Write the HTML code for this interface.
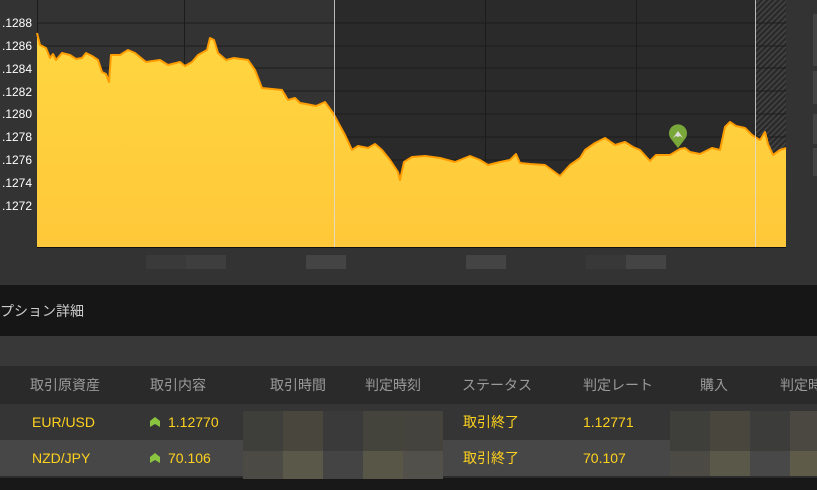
<!DOCTYPE html>
<html><head><meta charset="utf-8"><style>
body{margin:0;width:817px;height:490px;overflow:hidden;background:#181818;font-family:"Liberation Sans","Noto Sans CJK JP",sans-serif;position:relative}
.a{position:absolute}
.t{position:absolute;font-size:14px;line-height:16px;white-space:nowrap}
.h{color:#9a9a9a}
.y{color:#ffd21e}
.b{position:absolute;width:40px}
</style></head><body>
<div class="a" style="left:0;top:0;width:817px;height:285px;background:#333"></div>
<svg class="a" style="left:0;top:0" width="817" height="285">
<rect x="334" y="0" width="452" height="247" fill="#2a2a2a"/>
<defs><pattern id="hp" width="4" height="4" patternUnits="userSpaceOnUse" patternTransform="rotate(45)"><rect width="4" height="4" fill="#2a2a2a"/><rect width="1.5" height="4" fill="#444"/></pattern>
<linearGradient id="g" x1="0" y1="0" x2="0" y2="1"><stop offset="0" stop-color="#ffd640"/><stop offset="1" stop-color="#ffc83a"/></linearGradient></defs>
<rect x="755" y="0" width="31" height="247" fill="url(#hp)"/>
<g stroke="#1c1c1c" stroke-width="1">
<line x1="37" y1="23" x2="786" y2="23"/><line x1="37" y1="46" x2="786" y2="46"/><line x1="37" y1="68" x2="786" y2="68"/><line x1="37" y1="91" x2="786" y2="91"/><line x1="37" y1="114" x2="786" y2="114"/><line x1="37" y1="137" x2="786" y2="137"/><line x1="37" y1="160" x2="786" y2="160"/>
<line x1="37.5" y1="0" x2="37.5" y2="247"/><line x1="184.5" y1="0" x2="184.5" y2="247"/><line x1="485.5" y1="0" x2="485.5" y2="247"/><line x1="636.5" y1="0" x2="636.5" y2="247"/>
</g>
<polygon fill="url(#g)" points="37,247 37,33 40,45 46,48 50,58 53,54 56,60 62,53 70,55 76,59 82,58 86,53 92,56 98,60 102,72 106,74 109,82 111,55 120,55 128,50 135,53 146,62 160,60 168,65 180,62 185,66 192,62 198,55 207,50 210,38 214,40 218,53 226,60 234,58 248,60 255,70 262,88 272,89 282,90 288,100 295,98 300,103 306,104 316,106 325,102 333,113 345,135 352,150 358,146 368,148 375,144 382,150 390,160 398,172 400,180 404,162 412,157 425,156 440,158 455,162 470,156 480,160 488,165 500,162 510,160 516,154 520,163 530,164 545,165 560,176 570,165 580,158 585,150 595,143 605,138 615,145 625,142 633,147 640,150 650,161 656,155 670,155 680,149 685,148 690,152 700,154 712,148 720,150 725,127 730,122 736,126 745,128 752,135 755,137 760,140 765,132 768,144 773,155 780,150 786,148 786,247"/>
<polyline fill="none" stroke="#ff9c00" stroke-width="2" stroke-linejoin="round" points="37,33 40,45 46,48 50,58 53,54 56,60 62,53 70,55 76,59 82,58 86,53 92,56 98,60 102,72 106,74 109,82 111,55 120,55 128,50 135,53 146,62 160,60 168,65 180,62 185,66 192,62 198,55 207,50 210,38 214,40 218,53 226,60 234,58 248,60 255,70 262,88 272,89 282,90 288,100 295,98 300,103 306,104 316,106 325,102 333,113 345,135 352,150 358,146 368,148 375,144 382,150 390,160 398,172 400,180 404,162 412,157 425,156 440,158 455,162 470,156 480,160 488,165 500,162 510,160 516,154 520,163 530,164 545,165 560,176 570,165 580,158 585,150 595,143 605,138 615,145 625,142 633,147 640,150 650,161 656,155 670,155 680,149 685,148 690,152 700,154 712,148 720,150 725,127 730,122 736,126 745,128 752,135 755,137 760,140 765,132 768,144 773,155 780,150 786,148"/>
<line x1="334.5" y1="0" x2="334.5" y2="247" stroke="#ddd" stroke-width="1" opacity="0.8"/>
<line x1="755.5" y1="0" x2="755.5" y2="247" stroke="#ddd" stroke-width="1" opacity="0.8"/>
<line x1="37" y1="247.5" x2="786" y2="247.5" stroke="#111" stroke-width="1"/>
<path d="M678,148 L671,139 A9,9 0 1 1 685,139 Z" fill="#79a73a"/>
<path d="M673,138 L678,131 L683,138 L680,136 L678,137 L676,136 Z" fill="#ddd"/>
<g fill="#fff" font-size="12" font-family="Liberation Sans">
<text x="2" y="27">.1288</text><text x="2" y="50">.1286</text><text x="2" y="73">.1284</text><text x="2" y="96">.1282</text><text x="2" y="118">.1280</text><text x="2" y="141">.1278</text><text x="2" y="164">.1276</text><text x="2" y="187">.1274</text><text x="2" y="210">.1272</text>
</g>
<rect x="146" y="255" width="40" height="14" fill="#3a3a3a"/><rect x="186" y="255" width="40" height="14" fill="#3e3e3e"/>
<rect x="306" y="255" width="40" height="14" fill="#444"/>
<rect x="466" y="255" width="40" height="14" fill="#444"/>
<rect x="586" y="255" width="40" height="14" fill="#383838"/><rect x="626" y="255" width="40" height="14" fill="#444"/>
<rect x="813" y="14" width="4" height="52" fill="#444"/><rect x="813" y="71" width="4" height="33" fill="#444"/><rect x="813" y="114" width="4" height="30" fill="#444"/><rect x="813" y="148" width="4" height="28" fill="#444"/>
</svg>
<div class="a" style="left:0;top:285px;width:817px;height:51px;background:#161616"></div>
<div class="t" style="left:0;top:303px;font-size:14px;color:#ccc">プション詳細</div>
<div class="a" style="left:0;top:336px;width:817px;height:30px;background:#383838"></div>
<div class="a" style="left:0;top:366px;width:817px;height:38px;background:#2a2a2a"></div>
<div class="a" style="left:0;top:404px;width:817px;height:36px;background:#353535"></div>
<div class="a" style="left:0;top:440px;width:817px;height:36px;background:#474747"></div>
<div class="a" style="left:0;top:476px;width:817px;height:2px;background:#2c2c2c"></div>
<div class="t h" style="left:30px;top:377px">取引原資産</div>
<div class="t h" style="left:150px;top:377px">取引内容</div>
<div class="t h" style="left:270px;top:377px">取引時間</div>
<div class="t h" style="left:365px;top:377px">判定時刻</div>
<div class="t h" style="left:462px;top:377px">ステータス</div>
<div class="t h" style="left:583px;top:377px">判定レート</div>
<div class="t h" style="left:700px;top:377px">購入</div>
<div class="t h" style="left:780px;top:377px">判定時</div>
<div class="t y" style="left:32px;top:414px">EUR/USD</div>
<div class="t y" style="left:32px;top:450px">NZD/JPY</div>
<div class="t y" style="left:168px;top:414px">1.12770</div>
<div class="t y" style="left:168px;top:450px">70.106</div>
<svg class="a" style="left:150px;top:417px" width="12" height="10"><path d="M0,10 L0,4 L5,0 L10,4 L10,10 L5,7 Z" fill="#8bc53f"/></svg>
<svg class="a" style="left:150px;top:453px" width="12" height="10"><path d="M0,10 L0,4 L5,0 L10,4 L10,10 L5,7 Z" fill="#8bc53f"/></svg>
<div class="t y" style="left:463px;top:414px">取引終了</div>
<div class="t y" style="left:463px;top:450px">取引終了</div>
<div class="t y" style="left:583px;top:414px">1.12771</div>
<div class="t y" style="left:583px;top:450px">70.107</div>
<div class="b" style="left:243px;top:411px;height:40px;background:#3e3f3a"></div>
<div class="b" style="left:283px;top:411px;height:40px;background:#48463d"></div>
<div class="b" style="left:323px;top:411px;height:40px;background:#3a3a3a"></div>
<div class="b" style="left:363px;top:411px;height:40px;background:#45443c"></div>
<div class="b" style="left:403px;top:411px;height:40px;background:#45433d"></div>
<div class="b" style="left:243px;top:451px;height:28px;background:#4b4a45"></div>
<div class="b" style="left:283px;top:451px;height:28px;background:#5a5848"></div>
<div class="b" style="left:323px;top:451px;height:28px;background:#444"></div>
<div class="b" style="left:363px;top:451px;height:28px;background:#585647"></div>
<div class="b" style="left:403px;top:451px;height:28px;background:#52504a"></div>
<div class="b" style="left:670px;top:411px;height:40px;background:#3e3f3a"></div>
<div class="b" style="left:710px;top:411px;height:40px;background:#48463d"></div>
<div class="b" style="left:750px;top:411px;height:40px;background:#3c3c3a"></div>
<div class="b" style="left:790px;top:411px;height:40px;background:#4a4840"></div>
<div class="b" style="left:670px;top:451px;height:25px;background:#4b4a45"></div>
<div class="b" style="left:710px;top:451px;height:25px;background:#5a5848"></div>
<div class="b" style="left:750px;top:451px;height:25px;background:#484848"></div>
<div class="b" style="left:790px;top:451px;height:25px;background:#5e5b48"></div>
</body></html>
